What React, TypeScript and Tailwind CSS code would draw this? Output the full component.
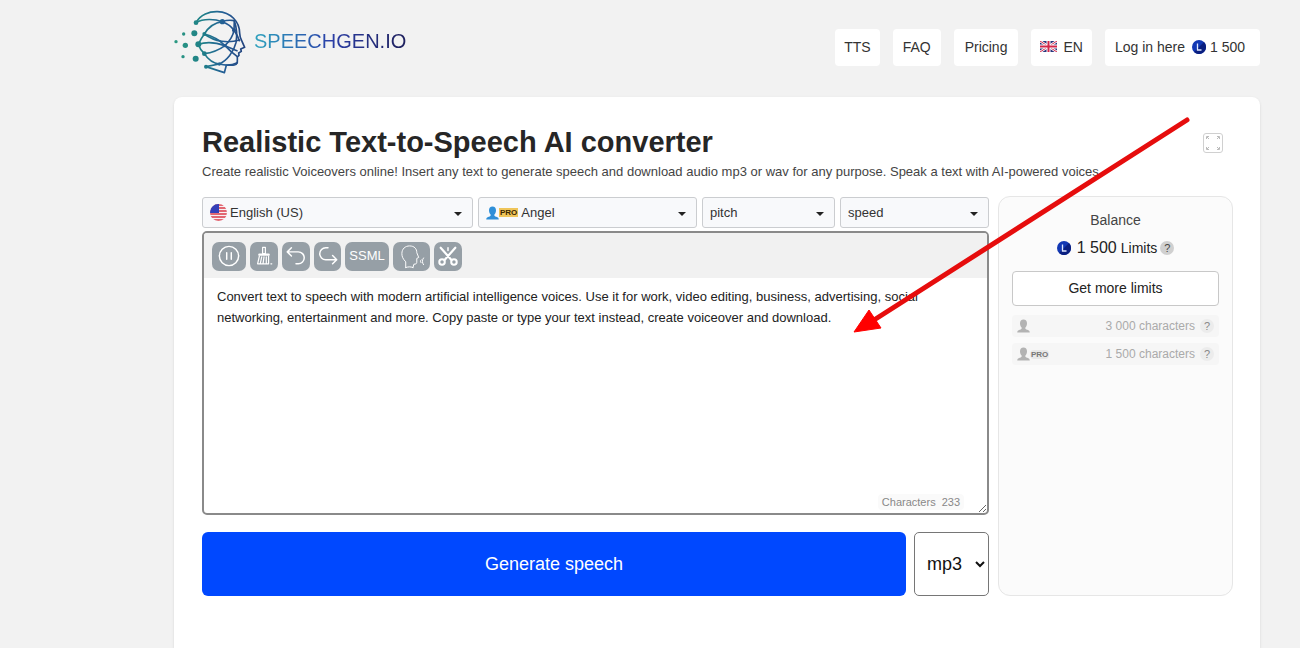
const LogoMark = () => (
  <svg viewBox="27 30 216 195" className="h-[65px] w-[72px]" fill="none" aria-hidden="true">
    <defs>
      <linearGradient id="mark" x1="27" y1="0" x2="243" y2="0" gradientUnits="userSpaceOnUse">
        <stop offset="0" stopColor="#2c9a82" />
        <stop offset="0.4" stopColor="#1e7f88" />
        <stop offset="0.7" stopColor="#245e96" />
        <stop offset="1" stopColor="#23417c" />
      </linearGradient>
    </defs>
    <g stroke="url(#mark)" strokeWidth="5" strokeLinecap="round" strokeLinejoin="round">
      <path d="M93 68C106 44 133 34 158 35C197 37 224 64 224 100C224 110 227 117 231 124L239 142L227 147L229 154L221 159L222 166L217 171C217 184 219 193 208 195C198 197 189 194 184 196L178 218L123 200L163 192" />
      <path d="M93 68C115 55 150 57 172 65C190 72 200 80 207 91C215 102 220 112 223 122" />
      <path d="M172 65C185 60 197 60 208 62L207 91" />
      <path d="M100 133C106 120 112 110 118 102C130 82 150 68 172 65" />
      <path d="M118 102C145 108 165 122 180 137C192 150 205 161 217 170" />
      <path d="M100 133C125 124 155 128 180 137C192 142 205 148 216 152" />
      <path d="M118 102C150 126 190 130 224 120" />
      <path d="M118 161C145 158 165 148 180 137C195 122 204 108 207 91" />
      <path d="M100 133C104 146 110 154 118 161C130 180 145 190 163 192C185 182 207 155 213 128C217 105 214 80 208 62" />
      <path d="M163 192C182 197 203 195 217 188" />
    </g>
    <g fill="url(#mark)">
      <circle cx="33" cy="125" r="5" />
      <circle cx="56" cy="102" r="5" />
      <circle cx="61" cy="136" r="8" />
      <circle cx="54" cy="170" r="5" />
      <circle cx="88" cy="100" r="9" />
      <circle cx="92" cy="176" r="9" />
      <circle cx="93" cy="68" r="7" />
      <circle cx="100" cy="133" r="9" />
      <circle cx="118" cy="102" r="6" />
      <circle cx="118" cy="161" r="7" />
      <circle cx="172" cy="65" r="8" />
      <circle cx="207" cy="91" r="6" />
      <circle cx="180" cy="137" r="5" />
      <circle cx="163" cy="192" r="5" />
      <circle cx="123" cy="200" r="6" />
    </g>
  </svg>
)

const FlagGB = () => (
  <svg viewBox="0 0 34 22" className="h-[11px] w-[17px]" aria-hidden="true">
    <path fill="#27337a" d="M0 0h34v22H0z" />
    <path stroke="#fff" strokeWidth="5" d="M0 0l34 22M34 0L0 22" />
    <path stroke="#d2264a" strokeWidth="2" d="M0 0l34 22M34 0L0 22" />
    <path stroke="#fff" strokeWidth="8" d="M17 0v22M0 11h34" />
    <path stroke="#d2264a" strokeWidth="4" d="M17 0v22M0 11h34" />
  </svg>
)

const FlagUS = () => (
  <svg viewBox="0 0 34 34" className="mr-[3px] size-[17px] shrink-0" aria-hidden="true">
    <clipPath id="round">
      <circle cx="17" cy="17" r="17" />
    </clipPath>
    <g clipPath="url(#round)">
      <path fill="#f7f1f3" d="M0 0h34v34H0z" />
      <path stroke="#dc3a48" strokeWidth="2.8" d="M0 2h34M0 8h34M0 14h34M0 20h34M0 26h34M0 32h34" />
      <path fill="#3440b8" d="M0 0h18v18H0z" />
    </g>
  </svg>
)

const Coin = () => (
  <svg viewBox="0 0 28 28" className="size-[14px] shrink-0" fill="none" aria-hidden="true">
    <circle cx="14" cy="14" r="14" fill="#1238b4" />
    <path d="M24 4A14 14 0 0 1 4 24z" fill="#0a1f80" />
    <path d="M11 7v13h8" stroke="#dfe8ff" strokeWidth="2.6" />
  </svg>
)

const Person = ({ className }: { className: string }) => (
  <svg viewBox="0 0 26 28" className={`h-[14px] w-[13px] shrink-0 ${className}`} fill="currentColor" aria-hidden="true">
    <path d="M13 1c4.500 0 7 3 7 7.500c0 4-1.800 7.500-3.500 9c0 2.500 1 3 4 4c3.500 1 5 2.500 5 5.500H.500c0-3 1.500-4.500 5-5.500c3-1 4-1.500 4-4C7.800 16 6 12.500 6 8.500C6 4 8.500 1 13 1z" />
  </svg>
)

const Help = ({ label, className }: { label: string; className: string }) => (
  <button type="button" aria-label={label} className={`size-[14px] shrink-0 rounded-full text-center text-[11px] leading-[14px] ${className}`}>
    ?
  </button>
)

const Picker = ({ label, value, icon }: { label: string; value: string; icon?: React.ReactNode }) => (
  <div className="flex h-[31px] min-w-0 items-center rounded-[3px] border border-[#cbcdd0] bg-[#f8f9fb] pl-[7px] pr-[10px]">
    {icon}
    <select aria-label={label} className="h-full min-w-0 flex-1 appearance-none bg-transparent text-[13px] text-[#333] outline-none">
      <option>{value}</option>
    </select>
    <svg viewBox="0 0 8 4" className="mt-[2px] h-1 w-2 shrink-0" aria-hidden="true">
      <path d="M0 0h8L4 4z" fill="#222" />
    </svg>
  </div>
)

const Tool = ({ label, className, children }: { label: string; className: string; children: React.ReactNode }) => (
  <button type="button" aria-label={label} className={`flex h-[29px] items-center justify-center rounded-[7px] bg-[#969fa6] text-white ${className}`}>
    {children}
  </button>
)

const Icon = ({ children, className = "size-[22px]" }: { children: React.ReactNode; className?: string }) => (
  <svg viewBox="0 0 24 24" className={className} fill="none" stroke="currentColor" strokeWidth="1.6" strokeLinecap="round" strokeLinejoin="round" aria-hidden="true">
    {children}
  </svg>
)

const Toolbar = () => (
  <div className="flex h-[45px] items-center gap-1 bg-[#f1f1f1] px-2 pt-px text-[13px]">
    <Tool label="Pause" className="w-[34px]">
      <Icon>
        <circle cx="12" cy="12" r="10.500" />
        <path d="M9.500 8.500v7M14.500 8.500v7" />
      </Icon>
    </Tool>
    <Tool label="Clear" className="w-7">
      <Icon>
        <path strokeWidth="1.300" d="M10.500 2.500h3v7h-3z" />
        <path d="M7 10.500h10" strokeWidth="2.600" />
        <path strokeWidth="1.300" d="M7 12L5 20.500h12L17 12M9.500 13l-1.500 7M12 13l-1 7M14.500 13v7M19.500 20.500h1" />
      </Icon>
    </Tool>
    <Tool label="Undo" className="w-7">
      <Icon>
        <path d="M7 3L2.500 7.500L7 12M3 7.500h11.500a6.500 6.500 0 0 1 0 13H12" />
      </Icon>
    </Tool>
    <Tool label="Redo" className="w-[27px]">
      <Icon>
        <path d="M12 3H9.500a6.500 6.500 0 0 0 0 13H21M17 11.500l4.500 4.500l-4.500 4.500" />
      </Icon>
    </Tool>
    <Tool label="SSML" className="w-11">SSML</Tool>
    <Tool label="Dialogue" className="w-[37px]">
      <svg viewBox="0 0 30 26" className="h-[25px] w-[29px]" fill="none" stroke="currentColor" strokeWidth="1" strokeLinejoin="round" strokeLinecap="round" aria-hidden="true">
        <path d="M9 24.500v-6C6 15.500 5 13 5 10C5 5 8.500 2 13 2c5 0 7.500 3 7.500 7l2 5l-2 1v4c0 1.500-1 2-3 2l-1 3.500M9 24.500c3-1 5-1 7.500 0" />
        <path d="M25 16.500c-1 .8-1 2.200 0 3M27.500 14.500c-1.600 2-1.600 5 0 7" />
      </svg>
    </Tool>
    <Tool label="Cut" className="w-7">
      <Icon>
        <path strokeWidth="2.400" d="M4 3l11.500 13M20 3L8.500 16" />
        <circle cx="5.500" cy="18.500" r="3" strokeWidth="2.200" />
        <circle cx="18.500" cy="18.500" r="3" strokeWidth="2.200" />
        <path d="M12 3v3" />
      </Icon>
    </Tool>
  </div>
)

const Header = () => (
  <header className="flex h-[97px] items-start justify-between">
    <a href="#" className="flex items-center gap-2 pt-[10px]">
      <LogoMark />
      <span className="bg-linear-to-r from-[#2fa3bd] via-[#2b3fa8] to-[#1d1f5c] bg-clip-text pb-1 text-xl text-transparent">SPEECHGEN.IO</span>
    </a>
    <nav className="flex gap-[13px] pt-[29px] text-sm text-[#333]">
      <a href="#" className="flex h-[37px] items-center rounded bg-white px-[9px] pb-[2px]">TTS</a>
      <a href="#" className="flex h-[37px] items-center rounded bg-white px-[10px] pb-[2px]">FAQ</a>
      <a href="#" className="flex h-[37px] items-center rounded bg-white px-[11px] pb-[2px]">Pricing</a>
      <a href="#" className="flex h-[37px] items-center gap-[6px] rounded bg-white px-[9px] pb-[2px]">
        <FlagGB />
        EN
      </a>
      <a href="#" className="flex h-[37px] items-center rounded bg-white pb-[2px] pl-[10px] pr-[15px]">
        Log in here
        <span className="ml-[7px] flex items-center gap-1">
          <Coin />
          1 500
        </span>
      </a>
    </nav>
  </header>
)

const LimitRow = ({ amount, pro }: { amount: string; pro?: boolean }) => (
  <div className="flex h-[22px] items-center rounded bg-[#f6f6f6] px-[5px] text-xs text-[#aaa]">
    <Person className="text-[#b3b3b3]" />
    {pro && <span className="rounded-sm bg-[#e8e8e8] px-px text-[8px] font-bold leading-[9px] text-[#777]">PRO</span>}
    <span className="ml-auto mr-[5px]">{amount} characters</span>
    <Help label={`About ${amount} characters`} className="bg-[#ececec] text-[#888]" />
  </div>
)

const Balance = () => (
  <aside className="w-[235px] shrink-0 rounded-xl border border-[#e6e6e6] bg-[#fbfbfb] px-[13px] pt-[13px]">
    <h2 className="text-center text-sm text-[#444]">Balance</h2>
    <div className="mt-2 flex h-5 items-center justify-center text-sm text-[#222]">
      <Coin />
      <span className="ml-[6px] text-base">1 500</span>
      <span className="ml-1 mr-[3px]">Limits</span>
      <Help label="About limits" className="bg-[#d0d0d0] text-[#444]" />
    </div>
    <button type="button" className="mt-[13px] h-[35px] w-full rounded border border-[#c8c8c8] bg-white pb-px text-sm text-[#222]">Get more limits</button>
    <div className="mt-[9px] flex flex-col gap-[6px]">
      <LimitRow amount="3 000" />
      <LimitRow amount="1 500" pro />
    </div>
  </aside>
)

export default function App() {
  return (
    <div className="flex min-h-screen flex-col bg-[#f2f2f2] pl-[174px] pr-10 font-['Liberation_Sans',Arial,sans-serif]">
      <Header />
      <main className="relative flex-1 rounded-t-lg bg-white pb-[53px] pl-7 pr-[27px] pt-[27px] shadow">
        <div className="flex justify-between">
          <h1 className="text-[29px] font-bold leading-9 text-[#262626]">Realistic Text-to-Speech AI converter</h1>
          <button type="button" aria-label="Full screen" className="mr-[10px] mt-[9px] size-5 rounded-[3px] border border-[#d0d0d0]">
            <svg viewBox="0 0 18 18" className="size-[18px]" stroke="#bbb" fill="none" aria-hidden="true">
              <path d="M2.500 5V2.500H5M3 3l2 2M13 2.500h2.500V5M15 3l-2 2M2.500 13v2.500H5M3 15l2-2M15.500 13v2.500H13M15 15l-2-2" />
            </svg>
          </button>
        </div>
        <p className="mt-[2px] text-[13px] leading-5 text-[#444]">
          Create realistic Voiceovers online! Insert any text to generate speech and download audio mp3 or wav for any purpose. Speak a text with AI-powered voices.
        </p>

        <div className="mt-[14px] flex gap-[9px]">
          <form className="min-w-0 flex-1 pt-px" onSubmit={(e) => e.preventDefault()}>
            <div className="grid grid-cols-[271fr_219fr_133fr_149fr] gap-[5px]">
              <Picker label="Language" value="English (US)" icon={<FlagUS />} />
              <Picker
                label="Voice"
                value="Angel"
                icon={
                  <span className="mr-[3px] flex items-center">
                    <Person className="text-[#2f8fd8]" />
                    <span className="bg-[#efc55a] px-px text-[8px] font-bold leading-[9px] text-[#3a2500]">PRO</span>
                  </span>
                }
              />
              <Picker label="Pitch" value="pitch" />
              <Picker label="Speed" value="speed" />
            </div>

            <div className="relative mt-[3px] overflow-hidden rounded-[5px] border-2 border-[#8a8a8a]">
              <Toolbar />
              <textarea
                aria-label="Text to speak"
                className="block h-[235px] w-full resize px-[13px] py-2 text-[13px] leading-[21px] text-[#222] outline-none"
                defaultValue="Convert text to speech with modern artificial intelligence voices. Use it for work, video editing, business, advertising, social networking, entertainment and more. Copy paste or type your text instead, create voiceover and download."
              />
              <div className="absolute bottom-[3px] right-[23px] flex gap-[6px] rounded bg-[#fafafa] px-1 text-[11px] leading-4 text-[#888]">
                <span>Characters</span>
                <span>233</span>
              </div>
            </div>

            <div className="mt-[17px] flex gap-2">
              <button type="submit" className="h-16 flex-1 rounded-md bg-[#0048ff] text-lg text-white">Generate speech</button>
              <select aria-label="Audio format" className="w-[75px] rounded-[5px] border border-[#767676] bg-white pl-2 text-lg text-[#111]">
                <option>mp3</option>
              </select>
            </div>
          </form>
          <Balance />
        </div>

        {/* pointer towards the text box */}
        <svg viewBox="0 0 340 220" className="pointer-events-none absolute right-[68px] top-[19px] h-[220px] w-[340px]" aria-hidden="true">
          <path d="M335 4L22 204" stroke="#e60d0d" strokeWidth="5" strokeLinecap="round" />
          <path d="M2 216L17 194L29 212z" fill="#f00" stroke="#f00" />
        </svg>
      </main>
    </div>
  )
}
